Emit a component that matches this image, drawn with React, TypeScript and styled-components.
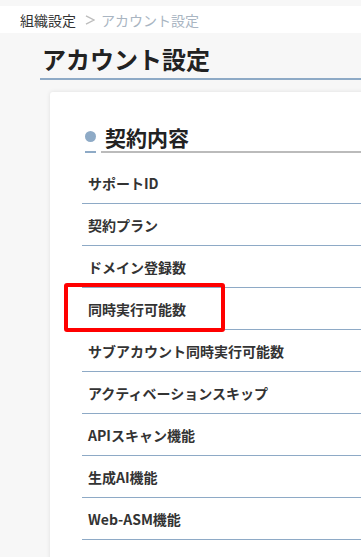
import React from 'react';
import styled, { createGlobalStyle } from 'styled-components';

const GlobalStyle = createGlobalStyle`
  body {
    margin: 0;
    background-color: #f7f7f7;
    font-family: 'Noto Sans CJK JP', 'Noto Sans', sans-serif;
    color: #222;
  }
`;

const Page = styled.div`
  width: 361px;
  height: 557px;
  overflow: hidden;
  padding-top: 6px;
  box-sizing: border-box;
`;

const Breadcrumb = styled.nav`
  height: 27px;
  background-color: #fff;
  display: flex;
  align-items: center;
  padding-left: 20px;
  font-size: 14px;
`;

const Crumb = styled.span<{ $current?: boolean }>`
  color: ${(p) => (p.$current ? '#a9b5c2' : '#333')};
`;

const Separator = styled.svg`
  width: 10px;
  height: 10px;
  margin: 1px 6px 0 9px;
`;

const PageTitle = styled.h1`
  margin: 0 0 0 40px;
  padding: 10px 0 3px 2px;
  line-height: 32px;
  font-size: 24px;
  font-weight: 700;
  border-bottom: 2px solid #8eaac6;
  white-space: nowrap;
`;

const Card = styled.section`
  margin: 12px 0 0 50px;
  width: 400px;
  background-color: #fff;
  border-radius: 3px;
  box-shadow: 0 0 4px rgba(0, 0, 0, 0.1);
  padding: 31px 0 40px 35px;
`;

const SectionHeader = styled.div`
  display: flex;
  align-items: flex-end;
`;

const DotMark = styled.div`
  width: 11px;
  padding-bottom: 9px;
  border-bottom: 2px solid #8eaac6;
  margin-right: 5px;

  &::before {
    content: '';
    display: block;
    width: 11px;
    height: 11px;
    border-radius: 50%;
    background-color: #8eaac6;
  }
`;

const SectionTitle = styled.h2`
  flex: 1;
  margin: 0;
  padding-left: 4px;
  font-size: 21px;
  line-height: 28px;
  font-weight: 700;
  border-bottom: 2px solid #bbb;
`;

const RowList = styled.ul`
  list-style: none;
  margin: 9px 0 0 -3px;
  padding: 0;
`;

const Row = styled.li`
  position: relative;
  height: 41px;
  display: flex;
  align-items: center;
  padding-left: 6px;
  border-bottom: 1px solid #8eaac6;
  font-size: 14px;
  font-weight: 700;
  color: #333;
  white-space: nowrap;
`;

const Highlight = styled.span`
  position: absolute;
  left: -18px;
  top: -5px;
  width: 161px;
  height: 49px;
  box-sizing: border-box;
  border: 4px solid #ff0000;
  border-radius: 3px;
`;

const items = [
  'サポートID',
  '契約プラン',
  'ドメイン登録数',
  '同時実行可能数',
  'サブアカウント同時実行可能数',
  'アクティベーションスキップ',
  'APIスキャン機能',
  '生成AI機能',
  'Web-ASM機能',
];

function App() {
  return (
    <Page>
      <GlobalStyle />
      <Breadcrumb>
        <Crumb>組織設定</Crumb>
        <Separator viewBox="0 0 10 10">
          <polyline points="1,0.8 9,5 1,9.2" fill="none" stroke="#bdbdbd" strokeWidth="1.4" />
        </Separator>
        <Crumb $current>アカウント設定</Crumb>
      </Breadcrumb>

      <PageTitle>アカウント設定</PageTitle>

      <Card>
        <SectionHeader>
          <DotMark />
          <SectionTitle>契約内容</SectionTitle>
        </SectionHeader>
        <RowList>
          {items.map((label) => (
            <Row key={label}>
              {label}
              {label === '同時実行可能数' && <Highlight />}
            </Row>
          ))}
        </RowList>
      </Card>
    </Page>
  );
}

export default App;
